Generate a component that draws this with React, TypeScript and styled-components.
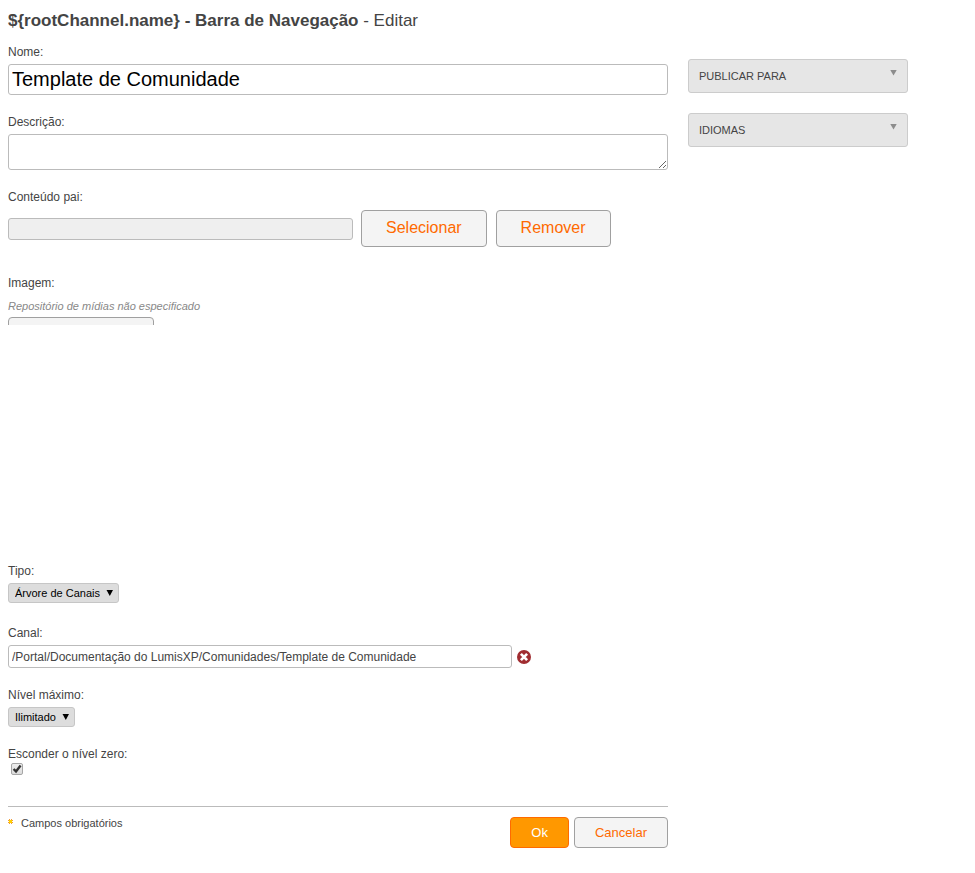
import React from "react";
import styled, { createGlobalStyle } from "styled-components";

const GlobalStyle = createGlobalStyle`
  *, *::before, *::after { box-sizing: border-box; }
  body {
    margin: 0;
    background: #fff;
    color: #444;
    font: 12px/16px "Liberation Sans", Arial, sans-serif;
  }
  button, input, select, textarea { font-family: inherit; margin: 0; }
`;

const Page = styled.div`
  padding: 8px;
`;

const Title = styled.h1`
  margin: 0 0 10px;
  font-size: 17px;
  line-height: 26px;
  font-weight: normal;
`;

const Columns = styled.div`
  display: flex;
  align-items: flex-start;
  gap: 20px;
`;

const Form = styled.form`
  flex: 1 1 0;
  min-width: 0;
  max-width: 660px;
`;

const Sidebar = styled.aside`
  flex: 0 0 220px;
  display: grid;
  gap: 20px;
  padding-top: 15px;
`;

const Panel = styled.button`
  display: flex;
  justify-content: space-between;
  align-items: flex-start;
  width: 100%;
  padding: 8px 10px;
  border: 1px solid #ccc;
  border-radius: 3px;
  background: #e6e6e6;
  color: #444;
  font-size: 11px;
  line-height: 16px;
  text-transform: uppercase;
`;

const PanelArrow = styled.svg`
  display: block;
  width: 7px;
  height: 6px;
  margin-top: 2px;
  fill: #8c8c8c;
`;

const Field = styled.div<{ $gap?: number }>`
  display: flex;
  flex-direction: column;
  align-items: flex-start;
  gap: 4px;
  margin-bottom: ${(p) => p.$gap ?? 19}px;
`;

const TextInput = styled.input<{ $large?: boolean }>`
  width: 100%;
  height: ${(p) => (p.$large ? 31 : 23)}px;
  padding: 0 3px;
  border: 1px solid #bbb;
  border-radius: 3px;
  background: #fff;
  color: ${(p) => (p.$large ? "#000" : "#444")};
  font-size: ${(p) => (p.$large ? 20 : 12)}px;
`;

const TextArea = styled.textarea`
  display: block;
  width: 100%;
  height: 36px;
  padding: 2px 3px;
  border: 1px solid #bbb;
  border-radius: 3px;
  background: #fff;
  resize: both;
`;

const PickerRow = styled.div`
  display: flex;
  align-items: center;
  width: 100%;
  gap: 9px;
  padding-top: 1px;
`;

const PickerInput = styled.input`
  flex: 0 1 345px;
  min-width: 0;
  height: 22px;
  margin-right: -1px;
  border: 1px solid #bbb;
  border-radius: 3px;
  background: #efefef;
`;

const PickerButton = styled.button`
  height: 37px;
  padding: 0 24px 2px;
  border: 1px solid #a0a0a0;
  border-radius: 4px;
  background: #f4f4f4;
  color: #ff6a00;
  font-size: 16px;
`;

const MediaField = styled.div`
  height: 288px;
`;

const MediaFrame = styled.div`
  height: 50px;
  overflow: hidden;
`;

const MediaLabel = styled.div`
  margin-bottom: 7px;
`;

const Hint = styled.em`
  display: block;
  margin-bottom: 3px;
  color: #888;
  font-size: 11px;
`;

const MediaButton = styled(PickerButton)`
  width: 146px;
`;

const SelectWrap = styled.div`
  display: grid;
  align-items: center;

  > * { grid-area: 1 / 1; }
`;

const Select = styled.select`
  appearance: none;
  height: 20px;
  padding: 0 18px 0 6px;
  border: 1px solid #c6c6c6;
  border-radius: 3px;
  background: #ddd;
  color: #000;
  font-size: 11px;
`;

const SelectArrow = styled.svg`
  justify-self: end;
  width: 7px;
  height: 6px;
  margin-right: 6px;
  pointer-events: none;
`;

const ChannelRow = styled.div`
  display: flex;
  align-items: center;
  gap: 5px;
  width: 100%;
  max-width: 523px;
`;

const ClearButton = styled.button`
  flex: none;
  display: block;
  width: 14px;
  height: 14px;
  padding: 0;
  border: 0;
  background: none;

  svg { display: block; }
`;

const CheckWrap = styled.span`
  display: grid;
  margin: -3px 0 0 3px;

  > * { grid-area: 1 / 1; }
`;

const CheckBox = styled.input`
  appearance: none;
  width: 12px;
  height: 12px;
  border: 1px solid #a6a6a6;
  border-radius: 2px;
  background: linear-gradient(#ededed, #dcdcdc);

  &:not(:checked) + svg { visibility: hidden; }
`;

const CheckMark = styled.svg`
  width: 12px;
  height: 12px;
  pointer-events: none;
`;

const Footer = styled.footer`
  display: flex;
  justify-content: space-between;
  align-items: flex-start;
  padding-top: 10px;
  border-top: 1px solid #bbb;
`;

const Required = styled.div`
  display: flex;
  gap: 8px;
  font-size: 11px;
  line-height: 13px;

  svg { display: block; margin-top: 2px; }
`;

const Actions = styled.div`
  display: flex;
  gap: 5px;
`;

const ActionButton = styled.button<{ $primary?: boolean }>`
  height: 31px;
  padding: 0 20px;
  border: 1px solid ${(p) => (p.$primary ? "#ff6a00" : "#a0a0a0")};
  border-radius: 4px;
  background: ${(p) => (p.$primary ? "#ff9800" : "#f4f4f4")};
  color: ${(p) => (p.$primary ? "#fff" : "#ff6a00")};
  font-size: 13px;
`;

function SelectBox({ id, value }: { id: string; value: string }) {
  return (
    <SelectWrap>
      <Select id={id} defaultValue={value}>
        <option>{value}</option>
      </Select>
      <SelectArrow viewBox="0 0 7 6" aria-hidden="true">
        <path d="M0.5 0H7L3.8 6Z" />
      </SelectArrow>
    </SelectWrap>
  );
}

function SidePanel({ title }: { title: string }) {
  return (
    <Panel type="button">
      <span>{title}</span>
      <PanelArrow viewBox="0 0 7 6" aria-hidden="true">
        <path d="M0.3 0H6.7L3.5 5.5Z" />
      </PanelArrow>
    </Panel>
  );
}

export default function App() {
  return (
    <Page>
      <GlobalStyle />
      <Title>
        <b>{"${rootChannel.name} - Barra de Navegação"}</b> - Editar
      </Title>
      <Columns>
        <Form onSubmit={(e) => e.preventDefault()}>
          <Field>
            <label htmlFor="name">Nome:</label>
            <TextInput id="name" $large defaultValue="Template de Comunidade" />
          </Field>
          <Field>
            <label htmlFor="description">Descrição:</label>
            <TextArea id="description" />
          </Field>
          <Field $gap={28}>
            <label htmlFor="parent">Conteúdo pai:</label>
            <PickerRow>
              <PickerInput id="parent" readOnly />
              <PickerButton type="button">Selecionar</PickerButton>
              <PickerButton type="button">Remover</PickerButton>
            </PickerRow>
          </Field>
          <MediaField>
            <MediaFrame>
              <MediaLabel>Imagem:</MediaLabel>
              <Hint>Repositório de mídias não especificado</Hint>
              <MediaButton type="button" aria-label="Imagem" />
            </MediaFrame>
          </MediaField>
          <Field $gap={22}>
            <label htmlFor="type">Tipo:</label>
            <SelectBox id="type" value="Árvore de Canais" />
          </Field>
          <Field>
            <label htmlFor="channel">Canal:</label>
            <ChannelRow>
              <TextInput
                id="channel"
                defaultValue="/Portal/Documentação do LumisXP/Comunidades/Template de Comunidade"
              />
              <ClearButton type="button" aria-label="Limpar canal">
                <svg width="14" height="14" viewBox="0 0 14 14">
                  <circle cx="7" cy="7" r="7" fill="#a02c30" />
                  <path d="M3.9 3.9L10.1 10.1M10.1 3.9L3.9 10.1" stroke="#fff" strokeWidth="2.7" />
                </svg>
              </ClearButton>
            </ChannelRow>
          </Field>
          <Field>
            <label htmlFor="level">Nível máximo:</label>
            <SelectBox id="level" value="Ilimitado" />
          </Field>
          <Field $gap={31}>
            <label htmlFor="hide-zero">Esconder o nível zero:</label>
            <CheckWrap>
              <CheckBox id="hide-zero" type="checkbox" defaultChecked />
              <CheckMark viewBox="0 0 12 12" aria-hidden="true">
                <path d="M2.6 6L5 8.4L9.6 2.6" fill="none" stroke="#333" strokeWidth="2.4" />
              </CheckMark>
            </CheckWrap>
          </Field>
          <Footer>
            <Required>
              <svg width="5" height="5" viewBox="0 0 5 5" aria-hidden="true">
                <path d="M1 0H2V1H3V0H4V1H5V2H4V3H5V4H4V5H3V4H2V5H1V4H0V3H1V2H0V1H1Z" fill="#ee9a3c" />
                <path d="M1 1H4V4H1Z" fill="#ffd000" />
              </svg>
              <span>Campos obrigatórios</span>
            </Required>
            <Actions>
              <ActionButton type="submit" $primary>Ok</ActionButton>
              <ActionButton type="button">Cancelar</ActionButton>
            </Actions>
          </Footer>
        </Form>
        <Sidebar>
          <SidePanel title="Publicar para" />
          <SidePanel title="Idiomas" />
        </Sidebar>
      </Columns>
    </Page>
  );
}
